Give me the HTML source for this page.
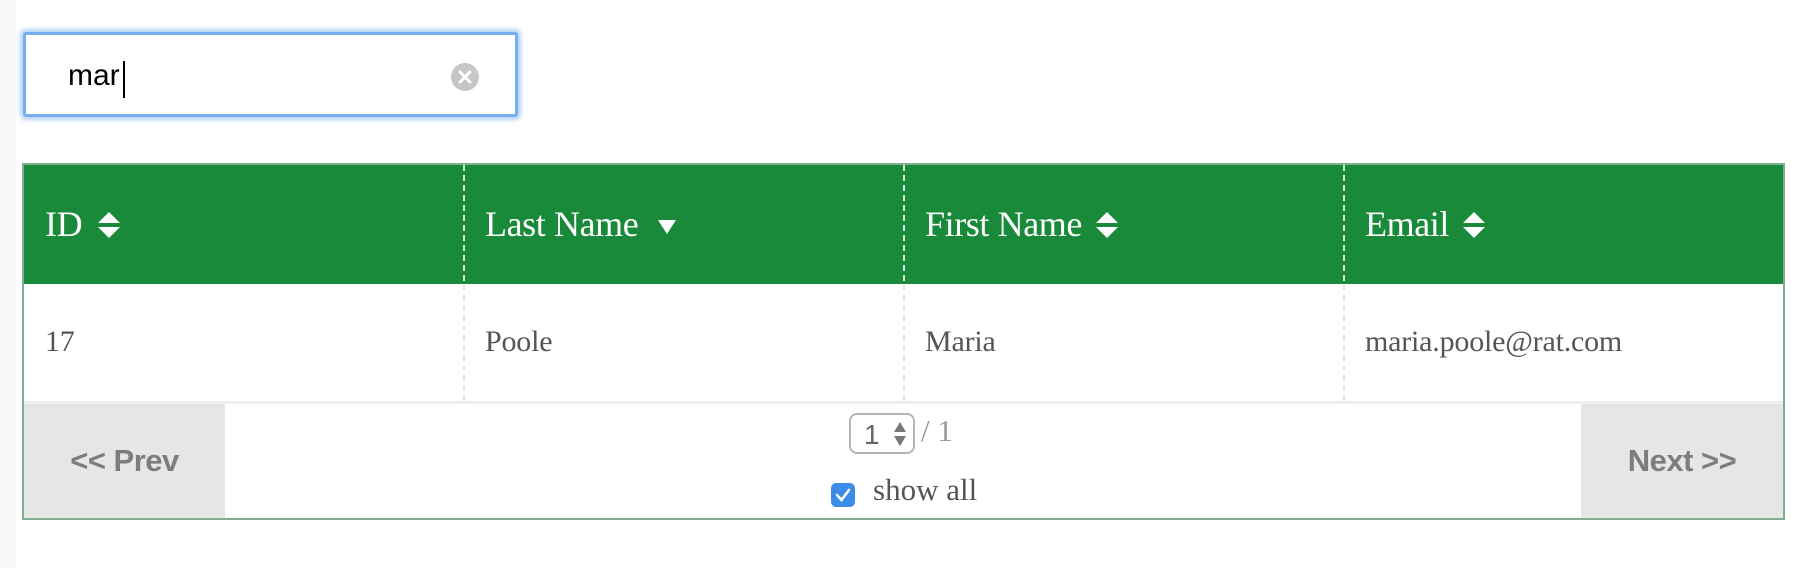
<!DOCTYPE html>
<html><head><meta charset="utf-8"><style>
html,body{margin:0;padding:0;width:1808px;height:568px;overflow:hidden;background:#fff;position:relative}
.strip{position:absolute;left:0;top:0;width:16px;height:568px;background:#f9f9f9}
.inp{position:absolute;left:23px;top:32px;width:495px;height:85px;box-sizing:border-box;border:3px solid #78aef0;border-radius:3px;box-shadow:0 0 4px 3px #b7d3f7;background:#fff}
.inp span{position:absolute;left:42px;top:24px;font:30px "Liberation Sans",sans-serif;color:#000}
.caret{position:absolute;left:97px;top:26px;width:2px;height:37px;background:#000}
.clr{position:absolute;left:425px;top:28px;width:28px;height:28px;border-radius:50%;background:#c6c6c6}
.tbl{position:absolute;left:22px;top:163px;width:1763px;height:357px;box-sizing:border-box;border:2px solid #80ae8e;background:#fff;overflow:hidden}
.hd{position:absolute;left:0;top:0;width:1759px;height:119px;background:#188a3a}
.vl{position:absolute;top:0;height:236px;border-left:2px dashed #c9dedb}
.vl.h{border-left-color:#d9eedd}
.ht{position:absolute;top:38px;font:36px "Liberation Serif",serif;color:#fff;white-space:nowrap;letter-spacing:-0.4px}
.bt{position:absolute;top:160px;font:30px "Liberation Serif",serif;color:#555;letter-spacing:-0.2px}
.ft{position:absolute;left:0;top:236px;width:1759px;height:117px;border-top:3px solid #efefef}
.btn{position:absolute;top:0;height:114px;background:#e6e6e6;font:bold 31px "Liberation Sans",sans-serif;color:#7d7d7d;text-align:center;line-height:114px;letter-spacing:-0.5px}
.sel{position:absolute;left:825px;top:9px;width:66px;height:41px;box-sizing:border-box;border:2px solid #b5b5b5;border-radius:8px;font:28px "Liberation Sans",sans-serif;color:#666}
.cb{position:absolute;left:807px;top:79px;width:24px;height:24px;border-radius:5px;background:#3b8de8}
</style></head><body>
<div class="strip"></div>
<div class="inp"><span>mar</span><div class="caret"></div>
<div class="clr"><svg width="28" height="28"><path d="M9 9L19 19M19 9L9 19" stroke="#fff" stroke-width="3" stroke-linecap="round"/></svg></div></div>
<div class="tbl">
<div class="hd"></div>
<div class="vl h" style="left:439px"></div><div class="vl h" style="left:879px"></div><div class="vl h" style="left:1319px"></div>
<div class="ht" style="left:21px">ID <svg width="24" height="32" style="vertical-align:-5px;margin-left:6px"><path d="M12 3L23 14H1Z M1 18H23L12 29Z" fill="#fff"/></svg></div>
<div class="ht" style="left:461px">Last Name <svg width="20" height="20" style="margin-left:10px"><path d="M1 4H19L10 18Z" fill="#fff"/></svg></div>
<div class="ht" style="left:901px">First Name <svg width="24" height="32" style="vertical-align:-5px;margin-left:4px"><path d="M12 3L23 14H1Z M1 18H23L12 29Z" fill="#fff"/></svg></div>
<div class="ht" style="left:1341px">Email <svg width="24" height="32" style="vertical-align:-5px;margin-left:4px"><path d="M12 3L23 14H1Z M1 18H23L12 29Z" fill="#fff"/></svg></div>
<div class="bt" style="left:21px">17</div>
<div class="bt" style="left:461px">Poole</div>
<div class="bt" style="left:901px">Maria</div>
<div class="bt" style="left:1341px">maria.poole@rat.com</div>
<div class="ft">
<div class="btn" style="left:0;width:201px">&lt;&lt; Prev</div>
<div class="btn" style="left:1557px;width:202px">Next &gt;&gt;</div>
<div class="sel"><span style="position:absolute;left:13px;top:4px">1</span><svg width="14" height="28" style="position:absolute;left:42px;top:5px"><path d="M7 2L13 12H1Z M1 16H13L7 26Z" fill="#777"/></svg></div>
<div style="position:absolute;left:897px;top:9px;font:31px 'Liberation Serif',serif;color:#999">/ 1</div>
<div class="cb"><svg width="24" height="24"><path d="M6 12L10.5 17L18 7" stroke="#fff" stroke-width="2.5" fill="none" stroke-linecap="round"/></svg></div>
<div style="position:absolute;left:849px;top:68px;font:31px 'Liberation Serif',serif;color:#555">show all</div>
</div>
</div>
</body></html>
